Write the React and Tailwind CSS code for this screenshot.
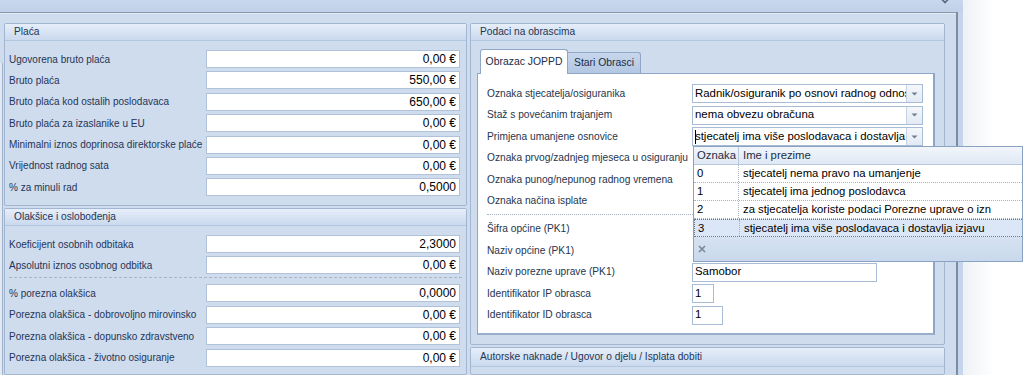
import { Fragment } from 'react';

const placa = [
  ['Ugovorena bruto plaća', '0,00 €'],
  ['Bruto plaća', '550,00 €'],
  ['Bruto plaća kod ostalih poslodavaca', '650,00 €'],
  ['Bruto plaća za izaslanike u EU', '0,00 €'],
  ['Minimalni iznos doprinosa direktorske plaće', '0,00 €'],
  ['Vrijednost radnog sata', '0,00 €'],
  ['% za minuli rad', '0,5000'],
];

const olaksice1 = [
  ['Koeficijent osobnih odbitaka', '2,3000'],
  ['Apsolutni iznos osobnog odbitka', '0,00 €'],
];

const olaksice2 = [
  ['% porezna olakšica', '0,0000'],
  ['Porezna olakšica - dobrovoljno mirovinsko', '0,00 €'],
  ['Porezna olakšica - dopunsko zdravstveno', '0,00 €'],
  ['Porezna olakšica - životno osiguranje', '0,00 €'],
];

const popisRows = [
  ['0', 'stjecatelj nema pravo na umanjenje'],
  ['1', 'stjecatelj ima jednog poslodavca'],
  ['2', 'za stjecatelja koriste podaci Porezne uprave o izn'],
  ['3', 'stjecatelj ima više poslodavaca i dostavlja izjavu'],
];

function GroupHeader({ title }) {
  return (
    <div className="h-[17px] flex items-center pl-[9px] border-b border-[#b3c6df] bg-gradient-to-b from-[#e6eef9] to-[#cad9ee] text-[10.2px] text-[#1f3556]">
      {title}
    </div>
  );
}

function MoneyRow({ label, value }) {
  return (
    <div className="flex items-center h-[18px]">
      <div className="w-[201px] pl-[4px] text-[10px] text-[#1f3556] whitespace-nowrap overflow-hidden">{label}</div>
      <div className="w-[254px] h-[18px] bg-white border border-[#b0c2da] flex items-center justify-end pr-[3px] text-[12px] text-black">
        {value}
      </div>
    </div>
  );
}

function Arrow() {
  return (
    <div className="w-[16px] h-full border-l border-[#c5d3e5] bg-gradient-to-b from-[#f4f7fb] to-[#e3eaf4] flex items-center justify-center">
      <svg width="7" height="4" viewBox="0 0 7 4">
        <path d="M0.5 0.5 L3.5 3.5 L6.5 0.5 Z" fill="#6f7f95" />
      </svg>
    </div>
  );
}

function Combo({ text, caret }) {
  return (
    <div className="w-[231px] h-[19px] bg-white border border-[#a9bcd6] flex items-center">
      <div className="flex-1 flex items-center pl-[2px] text-[11.4px] text-black whitespace-nowrap overflow-hidden">
        {caret && <span className="w-px h-[14px] bg-black -mr-px" />}
        {text}
      </div>
      <Arrow />
    </div>
  );
}

function FormRow({ label, children }) {
  return (
    <div className="flex items-center h-[19px]">
      <div className="w-[214px] pl-[9px] text-[10.2px] text-[#25364f] whitespace-nowrap">{label}</div>
      {children}
    </div>
  );
}

function TextBox({ w, value }) {
  return (
    <div className={`${w} h-[19px] bg-white border border-[#a9bcd6] flex items-center pl-[2px] text-[11.4px] text-black`}>
      {value}
    </div>
  );
}

export default function App() {
  return (
    <div className="w-[1024px] h-[375px] overflow-hidden flex bg-white relative font-['Liberation_Sans',Arial,sans-serif]">
      <div className="w-[963px] flex flex-col">
        {/* gornji rub prozora */}
        <div className="h-[12px] bg-gradient-to-b from-[#c8d8ed] to-[#bfd0e8] flex">
          <svg width="12" height="8" viewBox="0 0 12 8" className="ml-[939px] -mt-[2px]">
            <path d="M1.5 0 L6 4.5 L10.5 0" stroke="#5d6b7e" strokeWidth="1.6" fill="none" />
          </svg>
        </div>

        <div className="flex-1 flex">
          <div className="w-[956px] flex flex-col bg-[#cfdcee] border-t border-[#8b98ab]">
            <div className="h-px bg-[#e4ebf5]" />
            <div className="flex-1 flex pt-[9px]">
              <div className="w-[3px] mt-[40px] border-r border-[#9fb2cc] bg-[#e2e9f3]" />
              <div className="ml-[1px] w-[463px] flex flex-col gap-[2px]">
                {/* Plaća */}
                <div className="h-[183px] border border-[#a2b6d2] rounded-[2px]">
                  <GroupHeader title="Plaća" />
                  <div className="flex flex-col gap-[3.4px] pt-[9px]">
                    {placa.map(([l, v]) => (
                      <MoneyRow key={l} label={l} value={v} />
                    ))}
                  </div>
                </div>

                {/* Olakšice */}
                <div className="flex-1 border border-[#a2b6d2] rounded-[2px]">
                  <GroupHeader title="Olakšice i oslobođenja" />
                  <div className="flex flex-col gap-[3.4px] pt-[9px]">
                    {olaksice1.map(([l, v]) => (
                      <MoneyRow key={l} label={l} value={v} />
                    ))}
                  </div>
                  <div className="mx-[4px] h-[4px] border-b border-dashed border-[#aab6c6]" />
                  <div className="flex flex-col gap-[3.4px] pt-[6px]">
                    {olaksice2.map(([l, v]) => (
                      <MoneyRow key={l} label={l} value={v} />
                    ))}
                  </div>
                </div>
              </div>

              <div className="ml-[3px] w-[475px] flex flex-col gap-[2px]">
                {/* Podaci na obrascima */}
                <div className="h-[322px] border border-[#a2b6d2] rounded-[2px] flex flex-col">
                  <GroupHeader title="Podaci na obrascima" />
                  <div className="pt-[7px] pl-[6px] pr-[9px] pb-[9px] flex-1 flex flex-col">
                    <div className="flex items-end pl-[3px] h-[25px]">
                      <div className="w-[88px] h-[25px] bg-white border border-b-0 border-[#8fa6c6] rounded-t-[3px] flex items-center justify-center whitespace-nowrap text-[10.4px] text-[#1b2c45] relative top-px">
                        Obrazac JOPPD
                      </div>
                      <div className="w-[73px] h-[21px] bg-gradient-to-b from-[#c7d7ec] to-[#b3c7e3] border border-b-0 border-l-0 border-[#8fa6c6] rounded-tr-[3px] flex items-center justify-center whitespace-nowrap text-[10.4px] text-[#1b2c45]">
                        Stari Obrasci
                      </div>
                    </div>
                    <div className="flex-1 bg-white border border-[#8fa6c6] border-b-2 border-r-2 border-b-[#9aaecb] pt-[10px]">
                      <div className="flex flex-col gap-[2.5px]">
                        <FormRow label="Oznaka stjecatelja/osiguranika">
                          <Combo text="Radnik/osiguranik po osnovi radnog odnos" />
                        </FormRow>
                        <FormRow label="Staž s povećanim trajanjem">
                          <Combo text="nema obvezu obračuna" />
                        </FormRow>
                        <FormRow label="Primjena umanjene osnovice">
                          <Combo text="stjecatelj ima više poslodavaca i dostavlja" caret />
                        </FormRow>
                        <FormRow label="Oznaka prvog/zadnjeg mjeseca u osiguranju" />
                        <FormRow label="Oznaka punog/nepunog radnog vremena" />
                        <FormRow label="Oznaka načina isplate" />
                      </div>
                      <div className="ml-[9px] mr-[12px] h-[4px] border-b border-dotted border-[#a7b2c1]" />
                      <div className="flex flex-col gap-[2.5px] pt-[5px]">
                        <FormRow label="Šifra općine (PK1)" />
                        <FormRow label="Naziv općine (PK1)" />
                        <FormRow label="Naziv porezne uprave (PK1)">
                          <TextBox w="w-[185px]" value="Samobor" />
                        </FormRow>
                        <FormRow label="Identifikator IP obrasca">
                          <TextBox w="w-[22px]" value="1" />
                        </FormRow>
                        <FormRow label="Identifikator ID obrasca">
                          <TextBox w="w-[31px]" value="1" />
                        </FormRow>
                      </div>
                    </div>
                  </div>
                </div>

                {/* Autorske naknade */}
                <div className="flex-1 border border-[#a2b6d2] rounded-[2px]">
                  <div className="h-[19px] flex items-center pl-[9px] border-b border-[#b3c6df] bg-gradient-to-b from-[#e6eef9] to-[#cad9ee] text-[10.2px] text-[#1f3556]">
                    Autorske naknade / Ugovor o djelu / Isplata dobiti
                  </div>
                </div>
              </div>
            </div>
          </div>
          <div className="w-[2px] bg-[#7f8ca0]" />
          <div className="w-[5px] bg-[#c4d5ec]" />
        </div>
      </div>
      <div className="flex-1 bg-gradient-to-r from-[#eef1f5] via-white to-white" />

      {/* padajuća lista */}
      <div className="absolute left-[693px] top-[146px] w-[330px] h-[116px] bg-white border border-[#8aa2c2] flex flex-col text-[11.3px] text-black">
        <div className="h-[18px] flex border-b border-[#b7c7dc] bg-gradient-to-b from-[#f2f6fb] to-[#dfe8f4] text-[#1b2c45]">
          <div className="w-[45px] pl-[3px] flex items-center border-r border-[#b7c7dc]">Oznaka</div>
          <div className="flex-1 pl-[4px] flex items-center">Ime i prezime</div>
        </div>
        {popisRows.map(([o, n], i) => (
          <Fragment key={o}>
            <div
              className={`h-[18px] flex border-b border-dotted ${
                i === 3 ? 'bg-[#dbe7f6] border-[#6c7a8c] border-t border-l' : 'border-[#a9b3c0]'
              }`}
            >
              <div className="w-[45px] pl-[3px] flex items-center border-r border-dotted border-[#a9b3c0]">{o}</div>
              <div className="flex-1 pl-[4px] flex items-center whitespace-nowrap overflow-hidden">{n}</div>
            </div>
          </Fragment>
        ))}
        <div className="flex-1 bg-gradient-to-b from-[#d6e2f1] to-[#c9d8ec] flex items-center pl-[4px]">
          <svg width="8" height="8" viewBox="0 0 8 8">
            <path d="M1 1 L7 7 M7 1 L1 7" stroke="#7c8796" strokeWidth="1.6" />
          </svg>
        </div>
      </div>
    </div>
  );
}
